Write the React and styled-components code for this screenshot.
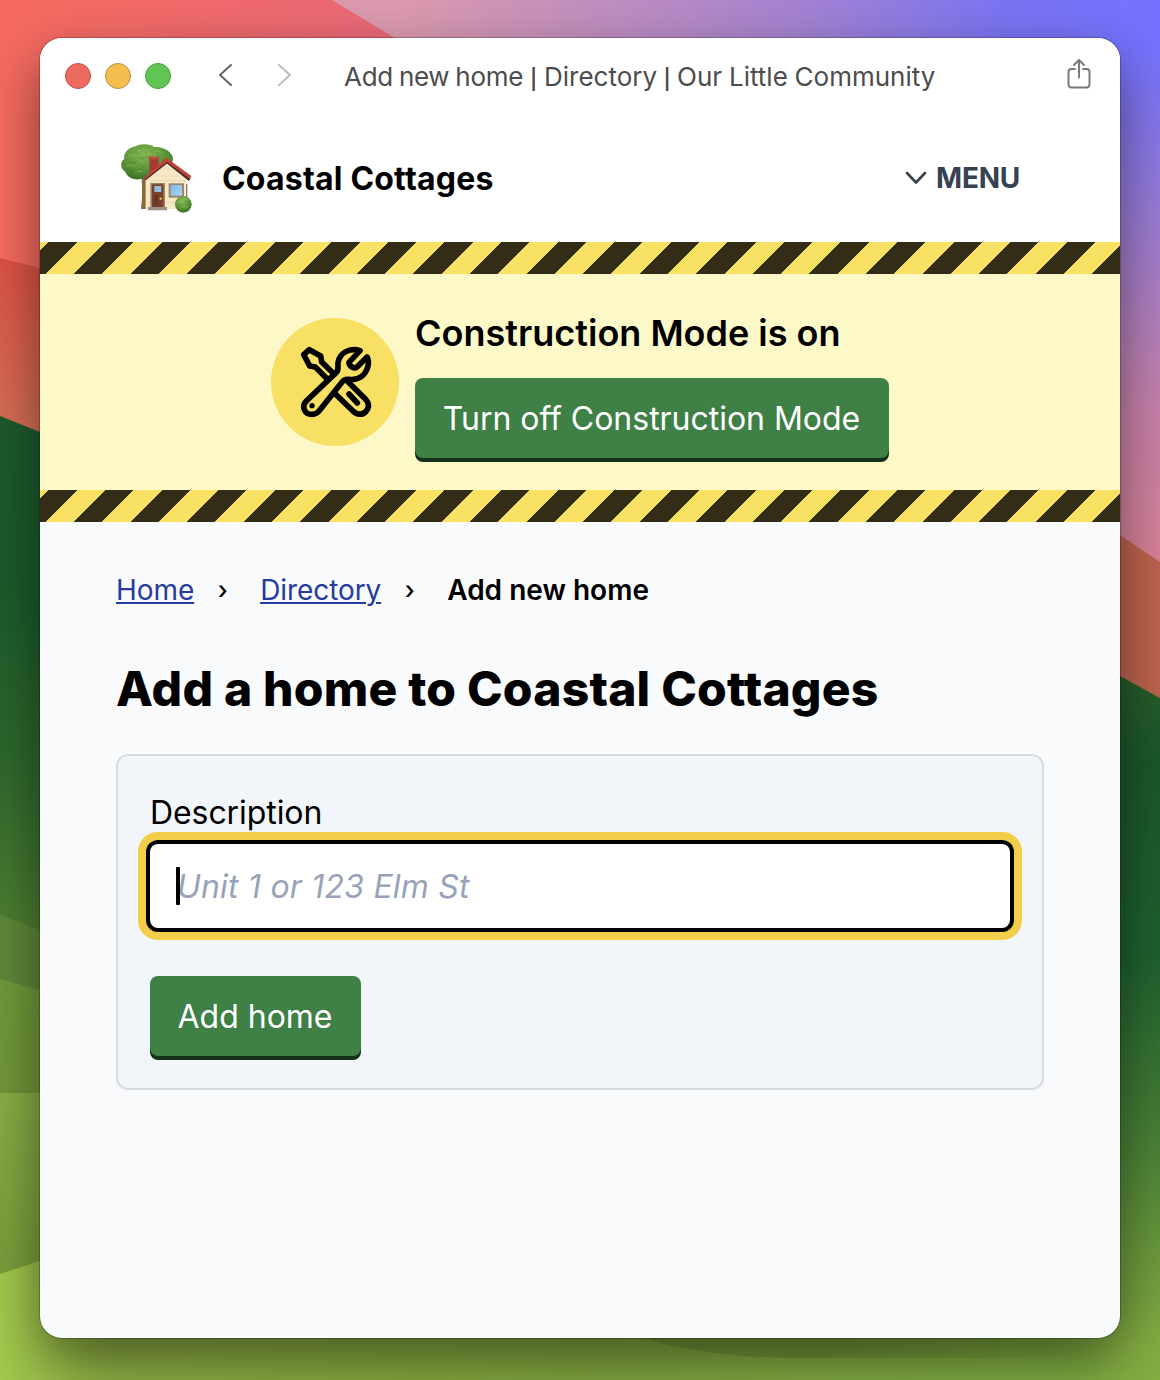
import React from "react";
import styled, { createGlobalStyle } from "styled-components";

const Global = createGlobalStyle`
  *, *::before, *::after { box-sizing: border-box; }
  body { margin: 0; font-family: Inter, "Liberation Sans", sans-serif; color: #000; }
  h1, h2, p { margin: 0; }
`;

const Desktop = styled.div`
  position: relative;
  width: 1160px;
  height: 1380px;
  padding: 38px 40px 42px;
  overflow: hidden;
`;

const Wallpaper = styled.svg`
  position: absolute;
  inset: 0;
`;

const Window = styled.main`
  position: relative;
  display: flex;
  flex-direction: column;
  height: 1300px;
  border-radius: 22px;
  background: #f9fafc;
  box-shadow: 0 0 0 1px rgba(0, 0, 0, 0.22), 0 22px 54px rgba(0, 0, 0, 0.48);
`;

const TitleBar = styled.div`
  display: flex;
  align-items: center;
  height: 76px;
  padding: 0 29px 0 25px;
  border-radius: 22px 22px 0 0;
  background: #fff;
`;

const Lights = styled.div`
  display: flex;
  gap: 14px;
`;

const Light = styled.span`
  width: 26px;
  height: 26px;
  border: 1px solid ${(p) => p.$edge};
  border-radius: 50%;
  background: ${(p) => p.$fill};
`;

const NavArrows = styled.div`
  display: flex;
  gap: 46px;
  margin-left: 47.5px;
  padding-bottom: 2px;
`;

const WindowTitle = styled.p`
  display: flex;
  flex: 1;
  align-items: baseline;
  margin-left: 53.5px;
  padding-top: 3px;
  font-size: 26px;
  line-height: 32px;
  color: #4c4c4c;
  white-space: pre;
`;

const TitlePart = styled.span`
  letter-spacing: ${(p) => p.$tracking || 0}px;
  word-spacing: ${(p) => p.$words || 0}px;
`;

const Pipe = styled.span`
  width: ${(p) => p.$width}px;
  font-size: 20px;
  font-weight: 600;
  text-align: center;
`;

const Share = styled.div`
  display: flex;
  padding-bottom: 4px;
`;

const Header = styled.header`
  display: flex;
  align-items: center;
  height: 128px;
  padding: 0 100px 0 80px;
  background: #fff;
`;

const SiteName = styled.p`
  flex: 1;
  margin-left: 30px;
  padding-top: 2px;
  font-size: 32px;
  font-weight: 700;
  line-height: 40px;
  letter-spacing: 0.2px;
  white-space: nowrap;
`;

const MenuButton = styled.button`
  display: flex;
  align-items: center;
  gap: 9px;
  padding: 0;
  border: 0;
  background: none;
  font: 700 28px/36px Inter, sans-serif;
  letter-spacing: -0.25px;
  color: #364152;
`;

const Hazard = styled.div`
  height: 32px;
  background: repeating-linear-gradient(-45deg, #332d17 0 20px, #f9e164 20px 40px);
`;

const Notice = styled.section`
  display: flex;
  align-items: center;
  justify-content: center;
  gap: 16px;
  height: 216px;
  background: #fdf8c8;
`;

const NoticeBody = styled.div`
  display: flex;
  flex-direction: column;
  align-items: flex-start;
  gap: 18px;
`;

const NoticeTitle = styled.h2`
  font-size: 36px;
  font-weight: 600;
  line-height: 54px;
  white-space: nowrap;
`;

const Button = styled.button`
  width: ${(p) => p.$width}px;
  height: 80px;
  padding: 2px 1px 0 0;
  border: 0;
  border-radius: 8px;
  background: #3e8045;
  box-shadow: 0 4px 0 #14311a;
  color: #fff;
  font: 400 32px/40px Inter, sans-serif;
  letter-spacing: -0.02px;
  white-space: nowrap;
`;

const Page = styled.div`
  padding: 48px 76px;
`;

const Crumbs = styled.nav`
  display: flex;
  align-items: center;
  height: 40px;
  font-size: 28px;
  line-height: 40px;
  white-space: nowrap;
`;

const CrumbLink = styled.a`
  color: #263c9c;
  letter-spacing: -0.08px;
  text-decoration: underline;
  text-decoration-thickness: 2px;
  text-underline-offset: 2px;
`;

const Separator = styled.span`
  width: 66px;
  padding-left: 23.5px;
  font-size: 25px;
  font-weight: 500;
`;

const Current = styled.span`
  font-weight: 600;
`;

const Heading = styled.h1`
  margin-top: 49px;
  font-size: 48px;
  font-weight: 800;
  line-height: 60px;
  letter-spacing: 0.21px;
  white-space: nowrap;
`;

const Card = styled.form`
  display: flex;
  flex-direction: column;
  align-items: flex-start;
  height: 336px;
  margin-top: 35px;
  padding: 32px;
  border: 2px solid #d8dce2;
  border-radius: 12px;
  background: #f2f5fa;
`;

const Label = styled.label`
  height: 56px;
  padding-top: 1px;
  font-size: 32px;
  line-height: 48px;
  letter-spacing: -0.08px;
`;

const Field = styled.div`
  position: relative;
  width: 100%;
  margin-bottom: 48px;
`;

const Input = styled.input`
  display: block;
  width: 100%;
  height: 84px;
  padding: 0 27px;
  border: 0;
  border-radius: 8px;
  outline: none;
  background: #fff;
  box-shadow: 0 0 0 4px #000, 0 0 0 12px #f2ce4a;
  font: 400 32px/40px Inter, sans-serif;
  &::placeholder {
    color: #98a2b8;
    font-style: italic;
    letter-spacing: 0.2px;
    opacity: 1;
  }
`;

const Caret = styled.span`
  position: absolute;
  left: 26px;
  top: 23px;
  width: 4px;
  height: 38px;
  border-radius: 1px;
  background: #000;
`;

function DesktopArt() {
  return (
    <Wallpaper width="1160" height="1380" viewBox="0 0 1160 1380" preserveAspectRatio="none" aria-hidden="true">
      <defs>
        <linearGradient id="red" x1="0" y1="0" x2="1" y2="0">
          <stop offset="0" stopColor="#f66b5e" />
          <stop offset="0.35" stopColor="#e9697a" />
        </linearGradient>
        <linearGradient id="sky" gradientUnits="userSpaceOnUse" x1="400" y1="0" x2="1160" y2="0">
          <stop offset="0" stopColor="#db9aae" />
          <stop offset="0.5" stopColor="#a884cf" />
          <stop offset="0.8" stopColor="#7a74f3" />
          <stop offset="1" stopColor="#7472ff" />
        </linearGradient>
        <linearGradient id="skyRight" gradientUnits="userSpaceOnUse" x1="0" y1="0" x2="0" y2="560">
          <stop offset="0.08" stopColor="#7472ff" />
          <stop offset="0.4" stopColor="#9b7cd2" />
          <stop offset="0.7" stopColor="#c381ac" />
          <stop offset="1" stopColor="#d88296" />
        </linearGradient>
        <linearGradient id="rust" gradientUnits="userSpaceOnUse" x1="0" y1="260" x2="0" y2="440">
          <stop offset="0" stopColor="#dc5245" />
          <stop offset="1" stopColor="#d57155" />
        </linearGradient>
        <linearGradient id="forest" gradientUnits="userSpaceOnUse" x1="0" y1="420" x2="0" y2="1000">
          <stop offset="0" stopColor="#1e5a2b" />
          <stop offset="0.3" stopColor="#1c5b2a" />
          <stop offset="0.6" stopColor="#2f682d" />
          <stop offset="0.88" stopColor="#4f7f31" />
        </linearGradient>
        <linearGradient id="forestRight" gradientUnits="userSpaceOnUse" x1="0" y1="680" x2="0" y2="1380">
          <stop offset="0" stopColor="#285c2a" />
          <stop offset="0.12" stopColor="#1b572b" />
          <stop offset="0.4" stopColor="#1f612e" />
          <stop offset="0.65" stopColor="#487f36" />
          <stop offset="0.95" stopColor="#84ad42" />
        </linearGradient>
        <linearGradient id="leaf" x1="0" y1="0" x2="0" y2="1">
          <stop offset="0" stopColor="#6f9a3b" />
          <stop offset="1" stopColor="#72953a" />
        </linearGradient>
        <linearGradient id="leafLight" x1="0" y1="0" x2="0" y2="1">
          <stop offset="0" stopColor="#87ae46" />
          <stop offset="1" stopColor="#799c39" />
        </linearGradient>
        <linearGradient id="lime" gradientUnits="userSpaceOnUse" x1="0" y1="0" x2="1160" y2="0">
          <stop offset="0" stopColor="#a2c94c" />
          <stop offset="0.1" stopColor="#8fb044" />
          <stop offset="0.5" stopColor="#83a83f" />
          <stop offset="1" stopColor="#80ae42" />
        </linearGradient>
        <linearGradient id="hill" gradientUnits="userSpaceOnUse" x1="640" y1="0" x2="1090" y2="0">
          <stop offset="0" stopColor="#719638" />
          <stop offset="0.4" stopColor="#719638" />
          <stop offset="1" stopColor="#719638" stopOpacity="0" />
        </linearGradient>
      </defs>
      <rect width="1160" height="700" fill="url(#red)" />
      <path d="M332 0H1160V600H1160L395 38Z" fill="url(#sky)" />
      <path d="M1100 38H1160V700H1100Z" fill="url(#skyRight)" />
      <path d="M0 258L40 268L600 400V700H0Z" fill="url(#rust)" />
      <path d="M1040 482L1120 535L1160 562V800H1040Z" fill="#bd644f" />
      <path d="M0 416L40 432L600 650V1380H0Z" fill="url(#forest)" />
      <path d="M600 450L1120 676L1160 698V1380H600Z" fill="url(#forestRight)" />
      <path d="M0 915L40 930L100 952V1000H0Z" fill="#5f8838" />
      <path d="M0 979L40 990L100 1004V1100H0Z" fill="url(#leaf)" />
      <path d="M0 1093H100V1280H0Z" fill="url(#leafLight)" />
      <path d="M0 1274L40 1261L100 1244L1000 1330H1160V1380H0Z" fill="url(#lime)" />
      <path d="M1100 1240H1160V1380H1100Z" fill="url(#forestRight)" />
      <path d="M600 1320L643 1338Q710 1358 800 1358H1090V1320Z" fill="url(#hill)" />
    </Wallpaper>
  );
}

function Chevron({ dir, color }) {
  return (
    <svg width="13" height="22" viewBox="0 0 13 22" fill="none" stroke={color} strokeWidth="2" strokeLinecap="round" strokeLinejoin="round" aria-hidden="true">
      <path d={dir === "left" ? "M12 1L1 11L12 21" : "M1 1L12 11L1 21"} />
    </svg>
  );
}

function ShareIcon() {
  return (
    <svg width="24" height="30" viewBox="0 0 24 30" fill="none" stroke="#777" strokeWidth="1.9" strokeLinecap="round" strokeLinejoin="round" aria-hidden="true">
      <path d="M8 10H4.5Q1.500 10 1.500 13V25Q1.500 28.500 4.500 28.500H19.500Q22.500 28.500 22.500 25V13Q22.500 10 19.500 10H16" />
      <path d="M12 18.500V1.500M7 6L12 1L17 6" />
    </svg>
  );
}

function HouseLogo() {
  return (
    <svg width="72" height="72" viewBox="29 24 216 216" aria-hidden="true">
      <defs>
        <radialGradient id="tree" cx="0.45" cy="0.3" r="0.7">
          <stop offset="0" stopColor="#83b84f" />
          <stop offset="0.6" stopColor="#5b9338" />
          <stop offset="1" stopColor="#3c7128" />
        </radialGradient>
        <linearGradient id="glass" x1="0" y1="0" x2="1" y2="1">
          <stop offset="0" stopColor="#7fb8ea" />
          <stop offset="1" stopColor="#a9d6f7" />
        </linearGradient>
      </defs>
      <g transform="translate(0 6)">
        <path d="M93 120H112V219H92Q98 170 93 120Z" fill="#8b6a3c" />
        <path d="M76 31C88 22 118 22 132 33C156 30 186 46 188 68C188 92 160 102 150 112C130 126 108 134 92 128C72 136 48 122 44 106C28 98 30 76 42 68C38 50 58 33 76 31Z" fill="url(#tree)" />
        <path d="M52 64q12-14 24-3M82 46q14-12 26 0M112 56q14-9 24 3M48 92q12-12 26 0M78 80q14-10 24 2M72 112q12-12 24-3M132 48q12-8 22 4" fill="none" stroke="#94c467" strokeWidth="4" opacity=".4" />
        <path d="M58 78q12 8 22-3M88 64q12 8 22-3M60 106q12 7 20-3" fill="none" stroke="#376e24" strokeWidth="4" opacity=".35" />
        <path d="M106 128L170 76L230 130V219H106Z" fill="#f8e9c6" />
        <path d="M112 134H226M112 200H226M130 120H206M148 100H190" stroke="#ead5aa" strokeWidth="2" />
        <path d="M117 64H145V92L117 112Z" fill="#a33d31" />
        <path d="M115 62H147V70H115Z" fill="#b94b3c" />
        <path d="M104 130L170 78L238 132" fill="none" stroke="#522323" strokeWidth="7" />
        <path d="M100 127L168 65L242 119L240 129L170 78L105 130Z" fill="#bd4238" />
        <path d="M120 141H164V215H120Z" fill="#9d8169" />
        <path d="M125 145H159V215H125Z" fill="#7a4028" />
        <path d="M132 150H153V168H132Z" fill="#91bddf" />
        <path d="M132 177H143V205H132Z" fill="#673421" />
        <circle cx="151" cy="188" r="3.500" fill="#f0c44e" />
        <path d="M175 142H221V185H175Z" fill="#9f856d" />
        <path d="M181 147H215V179H181Z" fill="url(#glass)" />
        <path d="M227 145H231V187H227Z" fill="#8e7764" />
        <path d="M113 213H170V223H113Z" fill="#9b9188" />
        <circle cx="219" cy="205" r="25" fill="url(#tree)" />
        <path d="M202 201q8-9 16 0M218 191q8-7 14 2M216 215q8-8 16 0" fill="none" stroke="#a2cd6a" strokeWidth="4" opacity=".5" />
      </g>
    </svg>
  );
}

function ToolsBadge() {
  return (
    <svg width="128" height="128" viewBox="18 24 384 384" fill="none" stroke="#000" strokeWidth="17" strokeLinecap="round" strokeLinejoin="round" aria-hidden="true">
      <circle cx="210" cy="216" r="192" fill="#f8e064" stroke="none" />
      <path d="M189 209L151 171L134 168L116 134L133 119L167 138L170 156L208 193" />
      <path d="M208 249L264 303C276 316 294 315 303 304C314 292 312 278 301 267L249 215" />
      <path d="M252 252L277 279" />
      <path d="M285 122C260 113 225 124 219 158C217 172 223 178 214 187L124 273C108 290 119 313 141 313C151 313 158 309 164 301L224 225C234 213 237 207 251 208C280 211 301 197 308 172C312 158 310 148 306 141L277 170C270 178 251 170 252 157L285 122Z" />
      <circle cx="141" cy="287" r="8" fill="#000" stroke="none" />
    </svg>
  );
}

export default function App() {
  return (
    <>
      <Global />
      <Desktop>
        <DesktopArt />
        <Window>
          <TitleBar>
            <Lights>
              <Light $fill="#ec6a5e" $edge="#c04f46" />
              <Light $fill="#f4bf4f" $edge="#b98d3d" />
              <Light $fill="#61c554" $edge="#4a9b3e" />
            </Lights>
            <NavArrows>
              <Chevron dir="left" color="#666" />
              <Chevron dir="right" color="#bbb" />
            </NavArrows>
            <WindowTitle>
              <TitlePart $tracking={-0.3} $words={-1}>Add new home</TitlePart>
              <Pipe $width={21}>|</Pipe>
              <TitlePart>Directory</TitlePart>
              <Pipe $width={20}>|</Pipe>
              <TitlePart $words={-0.5}>Our Little Community</TitlePart>
            </WindowTitle>
            <Share>
              <ShareIcon />
            </Share>
          </TitleBar>
          <Header>
            <HouseLogo />
            <SiteName>Coastal Cottages</SiteName>
            <MenuButton type="button">
              <svg width="22" height="14" viewBox="0 0 22 14" fill="none" stroke="currentColor" strokeWidth="2.600" strokeLinecap="round" strokeLinejoin="round" aria-hidden="true">
                <path d="M2 2L11 11.500L20 2" />
              </svg>
              MENU
            </MenuButton>
          </Header>
          <Hazard />
          <Notice>
            <ToolsBadge />
            <NoticeBody>
              <NoticeTitle>Construction Mode is on</NoticeTitle>
              <Button type="button" $width={474}>Turn off Construction Mode</Button>
            </NoticeBody>
          </Notice>
          <Hazard />
          <Page>
            <Crumbs>
              <CrumbLink>Home</CrumbLink>
              <Separator>›</Separator>
              <CrumbLink>Directory</CrumbLink>
              <Separator>›</Separator>
              <Current>Add new home</Current>
            </Crumbs>
            <Heading>Add a home to Coastal Cottages</Heading>
            <Card>
              <Label htmlFor="description">Description</Label>
              <Field>
                <Input id="description" placeholder="Unit 1 or 123 Elm St" />
                <Caret />
              </Field>
              <Button type="button" $width={211}>Add home</Button>
            </Card>
          </Page>
        </Window>
      </Desktop>
    </>
  );
}
